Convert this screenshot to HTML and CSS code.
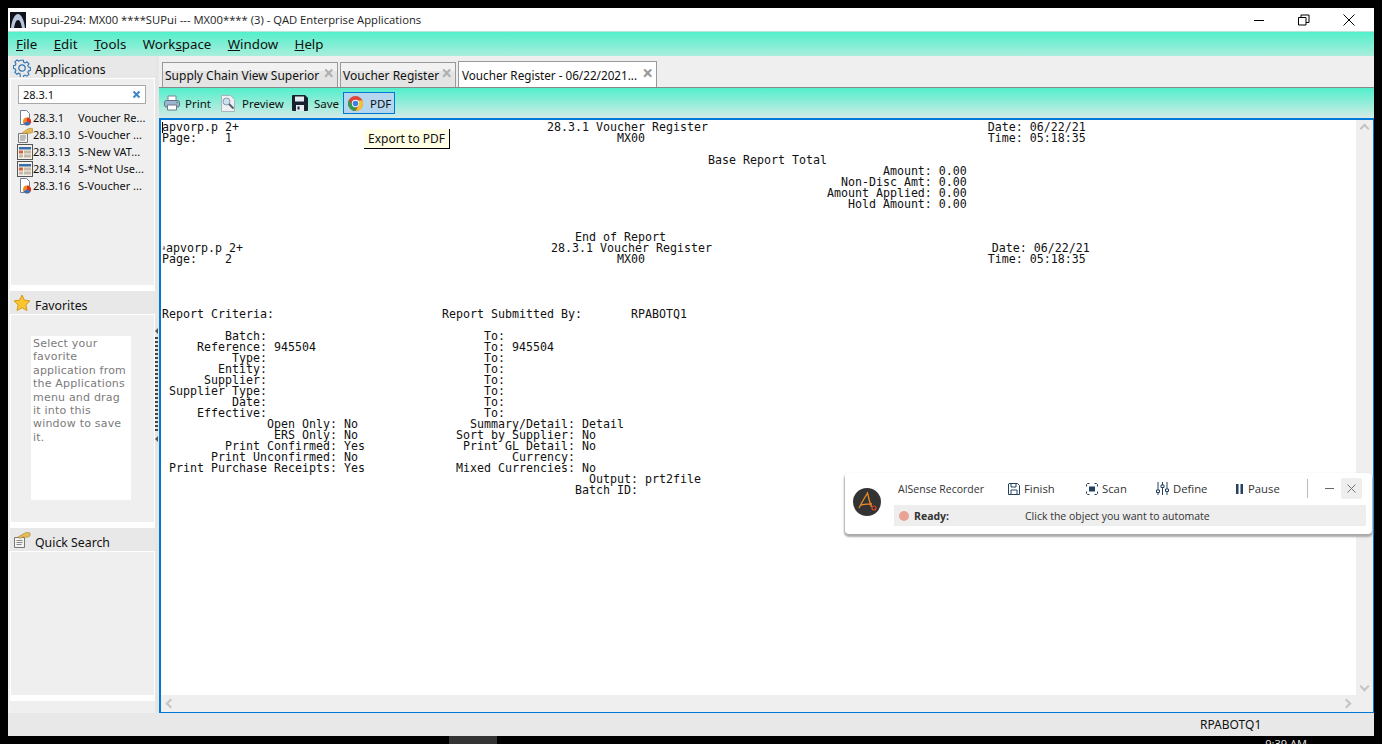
FILE: index.html
```html
<!DOCTYPE html>
<html lang="en">
<head>
<meta charset="utf-8">
<title>QAD Enterprise Applications</title>
<link rel="stylesheet" href="styles.css">
</head>
<body>
<div class="window">
  <header class="titlebar">
    <svg class="app-logo" width="16" height="16" viewBox="0 0 16 16"><rect width="16" height="16" fill="#10131c"/><path d="M1 16C2 7 5 2 8 2s6 5 7 14h-3C11 11 10 8 8 8s-3 3-4 8z" fill="#b9c6dc"/></svg>
    <span class="title-text">supui-294: MX00 ****SUPui --- MX00**** (3) - QAD Enterprise Applications</span>
    <div class="win-controls">
      <svg width="12" height="12" viewBox="0 0 12 12"><path d="M1 6.5h10" stroke="#000" fill="none"/></svg>
      <svg width="12" height="12" viewBox="0 0 12 12"><path d="M.5 3.5h7.5v7.5H.5zM3 3.5V1h8v7.5H8" stroke="#000" fill="none"/></svg>
      <svg width="12" height="12" viewBox="0 0 12 12"><path d="M.5.5l11 11M11.500.5l-11 11" stroke="#000" fill="none"/></svg>
    </div>
  </header>
  <nav class="menubar">
    <span><u>F</u>ile</span><span><u>E</u>dit</span><span><u>T</u>ools</span><span>Work<u>s</u>pace</span><span><u>W</u>indow</span><span><u>H</u>elp</span>
  </nav>
  <div class="workarea">
    <aside class="sidebar">
      <section class="panel panel-apps">
        <h2 class="panel-head">
          <svg width="18" height="18" viewBox="0 0 18 18"><path d="M7.400 1h3.200l.4 2.200 1.500.7 1.900-1.200 2.200 2.200-1.200 1.900.7 1.600 2 .4v3.200l-2 .4-.7 1.600 1.200 1.900-2.200 2.200-1.900-1.200-1.500.7-.4 1.900H7.400L7 15.600l-1.500-.7-1.900 1.200-2.200-2.200 1.200-1.900-.7-1.600-1.900-.4V6.800l1.900-.4.7-1.600-1.200-1.900 2.200-2.200 1.900 1.200L7 1.200z" transform="translate(.5 .3) scale(.93)" fill="none" stroke="#2f74b5" stroke-width="1.200"/><circle cx="9" cy="9" r="3.200" fill="none" stroke="#2f74b5" stroke-width="1.200"/></svg>
          Applications
        </h2>
        <div class="panel-body">
          <div class="search"><span>28.3.1</span><svg width="9" height="9" viewBox="0 0 9 9"><path d="M1.500 1.500l6 6M7.500 1.500l-6 6" stroke="#3f86c8" stroke-width="2"/></svg></div>
          <ul class="app-list">
            <li><svg class="ico" viewBox="0 0 16 16"><path d="M3.500.5h6l3 3v11h-9z" fill="#fff" stroke="#6f7f95"/><circle cx="10" cy="11.500" r="4" fill="#ef8a1d"/><path d="M10 11.500V7.500a4 4 0 0 1 3.500 6z" fill="#d9302a"/><path d="M10 11.500l3.500 2a4 4 0 0 1-6.900 0z" fill="#2f6fc4"/></svg><span>28.3.1</span><span>Voucher Re...</span></li>
            <li><svg class="ico" viewBox="0 0 16 16"><path d="M1.500 6.500h9v9h-9z" fill="#f2f2f2" stroke="#777"/><path d="M3 9h6M3 11h6M3 13h5" stroke="#888"/><path d="M5 6l5-3.500c2-1.500 4-1.500 6-.5v3c-2 1.500-5 1.500-7 1l-2 1z" fill="#e6bb57" stroke="#a57f26" stroke-width=".6"/></svg><span>28.3.10</span><span>S-Voucher ...</span></li>
            <li><svg class="ico" viewBox="0 0 16 16"><rect x=".5" y=".5" width="15" height="15" fill="#f4f1ea" stroke="#555"/><path d="M2 3h12v2.500H2z" fill="#3b6ea8"/><path d="M2 6.500h4v3H2z" fill="#d9623a"/><path d="M7 6.500h7v3H7zM2 10.500h4v3H2zM7 10.500h7v3H7z" fill="#c4b9a6"/></svg><span>28.3.13</span><span>S-New VAT...</span></li>
            <li><svg class="ico" viewBox="0 0 16 16"><rect x=".5" y=".5" width="15" height="15" fill="#f4f1ea" stroke="#555"/><path d="M2 3h12v2.500H2z" fill="#3b6ea8"/><path d="M2 6.500h4v3H2z" fill="#d9623a"/><path d="M7 6.500h7v3H7zM2 10.500h4v3H2zM7 10.500h7v3H7z" fill="#c4b9a6"/></svg><span>28.3.14</span><span>S-*Not Use...</span></li>
            <li><svg class="ico" viewBox="0 0 16 16"><path d="M3.500.5h6l3 3v11h-9z" fill="#fff" stroke="#6f7f95"/><circle cx="10" cy="11.500" r="4" fill="#ef8a1d"/><path d="M10 11.500V7.500a4 4 0 0 1 3.500 6z" fill="#d9302a"/><path d="M10 11.500l3.500 2a4 4 0 0 1-6.900 0z" fill="#2f6fc4"/></svg><span>28.3.16</span><span>S-Voucher ...</span></li>
          </ul>
        </div>
      </section>
      <section class="panel panel-favs">
        <h2 class="panel-head">
          <svg width="18" height="18" viewBox="0 0 18 18"><path d="M9 1l2.400 5.200 5.600.7-4.100 3.900 1.100 5.700L9 13.700l-5 2.800 1.100-5.700L1 6.900l5.600-.7z" fill="#fbc52d" stroke="#d49b1b"/></svg>
          Favorites
        </h2>
        <div class="panel-body fav-body">
          <p class="fav-note">Select your favorite application from the Applications menu and drag it into this window to save it.</p>
        </div>
      </section>
      <section class="panel panel-quick">
        <h2 class="panel-head">
          <svg width="18" height="18" viewBox="0 0 18 18"><path d="M1.500 6.500h10v10h-10z" fill="#f2f2f2" stroke="#777"/><path d="M3.500 9.500h6M3.500 11.500h6M3.500 13.500h5" stroke="#888"/><path d="M5 6l6-3.500c2-1 4-1.500 6-.5v3c-2 1.500-5 1.500-7 1l-3 1.500z" fill="#e6bb57" stroke="#a57f26" stroke-width=".6"/></svg>
          Quick Search
        </h2>
        <div class="panel-body quick-body"></div>
      </section>
      <div class="sidebar-foot"></div>
    </aside>
    <div class="splitter">
      <span class="grip-arrow"></span>
      <span class="grip-dots"></span>
      <span class="grip-arrow"></span>
    </div>
    <main class="content">
      <div class="tabs">
        <div class="tab tab-one"><span>Supply Chain View Superior</span><b>×</b></div>
        <div class="tab tab-two"><span>Voucher Register</span><b>×</b></div>
        <div class="tab tab-active"><span>Voucher Register - 06/22/2021...</span><b>×</b></div>
      </div>
      <div class="toolbar">
        <div class="tool tool-print">
          <svg width="16" height="16" viewBox="0 0 16 16"><path d="M4 1h8v5H4z" fill="#fff" stroke="#7a8794"/><rect x=".5" y="5.500" width="15" height="6.500" rx="2" fill="#9db6cf" stroke="#5f7488"/><path d="M3.500 10h9v5h-9z" fill="#fff" stroke="#6d7a88"/><circle cx="13" cy="7.500" r=".8" fill="#3b9b48"/></svg>
          <span>Print</span>
        </div>
        <div class="tool tool-preview">
          <svg width="16" height="17" viewBox="0 0 16 17"><path d="M1.500.5h9l4 4v12h-13z" fill="#eef0f2" stroke="#aab4bd"/><circle cx="6.500" cy="6.500" r="3.500" fill="#cfe0ef" stroke="#8499ae"/><path d="M9 9l4.500 4.500" stroke="#56616c" stroke-width="2"/></svg>
          <span>Preview</span>
        </div>
        <div class="tool tool-save">
          <svg width="16" height="16" viewBox="0 0 16 16"><path d="M1 0h12l3 3v12a1 1 0 0 1-1 1H1a1 1 0 0 1-1-1V1a1 1 0 0 1 1-1z" fill="#16222e"/><path d="M3 1.500h9v5H3z" fill="#e5ebf0"/><path d="M4 10h8v6H4z" fill="#e5ebf0"/><path d="M5.500 11.500h2v3h-2z" fill="#16222e"/></svg>
          <span>Save</span>
        </div>
        <div class="tool tool-pdf">
          <svg width="15" height="15" viewBox="0 0 16 16"><circle cx="8" cy="8" r="8" fill="#db4437"/><path d="M8 16a8 8 0 0 1-6.900-12L5 10.500 8.500 12z" fill="#2f9e4f"/><path d="M16 8a8 8 0 0 1-8 8l3.500-6L10 4.800h5.400c.4 1 .6 2.100.6 3.200z" fill="#f7c32e"/><circle cx="8" cy="8" r="3.900" fill="#fff"/><circle cx="8" cy="8" r="3" fill="#3f7fe0"/></svg>
          <span>PDF</span>
        </div>
      </div>
      <div class="report">
        <pre class="report-text"><span class="caret"></span>apvorp.p 2+                                            28.3.1 Voucher Register                                        Date: 06/22/21
Page:    1                                                       MX00                                                 Time: 05:18:35

                                                                              Base Report Total
                                                                                                       Amount: 0.00
                                                                                                 Non-Disc Amt: 0.00
                                                                                               Amount Applied: 0.00
                                                                                                  Hold Amount: 0.00


                                                           End of Report
<span class="ff-mark">ª</span>apvorp.p 2+                                            28.3.1 Voucher Register                                        Date: 06/22/21
Page:    2                                                       MX00                                                 Time: 05:18:35




Report Criteria:                        Report Submitted By:       RPABOTQ1

         Batch:                               To:
     Reference: 945504                        To: 945504
          Type:                               To:
        Entity:                               To:
      Supplier:                               To:
 Supplier Type:                               To:
          Date:                               To:
     Effective:                               To:
               Open Only: No                Summary/Detail: Detail
                ERS Only: No              Sort by Supplier: No
         Print Confirmed: Yes              Print GL Detail: No
       Print Unconfirmed: No                      Currency:
 Print Purchase Receipts: Yes             Mixed Currencies: No
                                                             Output: prt2file
                                                           Batch ID:</pre>
        <div class="scroll-v"><i class="chev chev-up"></i><i class="chev chev-down"></i></div>
        <div class="scroll-h"><i class="chev chev-left"></i><i class="chev chev-right"></i></div>
        <div class="scroll-corner"></div>
      </div>
    </main>
  </div>
  <footer class="statusbar"><span>RPABOTQ1</span></footer>
  <div class="tooltip">Export to PDF</div>
  <div class="recorder">
    <svg class="rec-logo" width="28" height="28" viewBox="0 0 28 28"><circle cx="14" cy="14" r="14" fill="#333"/><path d="M6 20C9 14 12 9 14.500 5c1 5 2.500 10 4 14M8 17c3-.5 7-1.500 11-1" fill="none" stroke="#ef8b24" stroke-width="1.300"/><circle cx="21" cy="20" r="2" fill="none" stroke="#d8442c" stroke-width="1.200"/></svg>
    <div class="rec-main">
      <div class="rec-actions">
        <span class="rec-name">AISense Recorder</span>
        <span class="rec-btn rec-finish"><svg width="12" height="12" viewBox="0 0 12 12"><path d="M1 .5h8.500l2 2V11.500H.5V1z" fill="none" stroke="#24415f"/><path d="M3 1v3h5V1M3 11V7h6v4" fill="none" stroke="#24415f"/></svg>Finish</span>
        <span class="rec-btn rec-scan"><svg width="12" height="12" viewBox="0 0 12 12"><path d="M.5 3.500V1.500l1-1h2M8.500.5h2l1 1v2M11.500 8.500v2l-1 1h-2M3.500 11.500h-2l-1-1v-2" fill="none" stroke="#24415f"/><rect x="3" y="3.500" width="6" height="5" fill="#24415f"/></svg>Scan</span>
        <span class="rec-btn rec-define"><svg width="13" height="13" viewBox="0 0 13 13"><path d="M2 0v13M6.500 0v13M11 0v13" stroke="#24415f"/><path d="M.5 8h3v2.500h-3zM5 3h3v2.500H5zM9.500 7h3v2.500h-3z" fill="#fff" stroke="#24415f"/></svg>Define</span>
        <span class="rec-btn rec-pause"><svg width="9" height="10" viewBox="0 0 9 10"><path d="M1 0h2.500v10H1zM5.500 0H8v10H5.500z" fill="#24415f"/></svg>Pause</span>
        <span class="rec-divider"></span>
        <span class="rec-min"></span>
        <span class="rec-close"><svg width="9" height="9" viewBox="0 0 9 9"><path d="M.5.500l8 8M8.500.500l-8 8" stroke="#777" fill="none"/></svg></span>
      </div>
      <div class="rec-status"><i class="rec-dot"></i><b>Ready:</b><span>Click the object you want to automate</span></div>
    </div>
  </div>
</div>
<div class="taskbar"><span class="task-item"></span><span class="clock">9:39 AM</span></div>
</body>
</html>
```

FILE: styles.css
```css
* { box-sizing: border-box; }
html, body { margin: 0; height: 100%; }
body {
  background: #000;
  overflow: hidden;
  font-family: "Noto Sans", "Open Sans", sans-serif;
  color: #111;
}
.window {
  position: relative;
  margin: 8px 8px 0;
  height: 728px;
  background: #f0f0f0;
  display: flex;
  flex-direction: column;
}
.titlebar {
  height: 23px;
  background: #fff;
  display: flex;
  align-items: center;
  padding-left: 2px;
}
.app-logo { margin-right: 5px; }
.title-text { color: #222; font-family: "Open Sans", sans-serif; font-size: 11.250px; }
.win-controls {
  margin-left: auto;
  display: flex;
  gap: 33px;
  padding-right: 19px;
}
.win-controls svg { display: block; }
.menubar {
  height: 25px;
  border-top: 1px solid #b9e7dc;
  background: linear-gradient(#52efcb, #a9eedc);
  display: flex;
  align-items: center;
  padding-left: 8px;
  gap: 16.400px;
  font-size: 13.300px;
}
.workarea { flex: 1; display: flex; min-height: 0; }
.sidebar {
  width: 145px;
  margin-left: 2px;
  display: flex;
  flex-direction: column;
  background: #fff;
}
.panel-head {
  margin: 0;
  height: 24px;
  background: #e8e8e8;
  display: flex;
  align-items: center;
  gap: 4px;
  padding: 5px 0 0 3px;
  font-size: 12.300px;
  font-weight: 400;
  border-bottom: 1px solid #fff;
}
.panel-head svg { margin-top: -4px; }
.panel-apps .panel-head { height: 23px; padding-top: 4px; }
.panel-apps .panel-head svg { margin-top: -3px; }
.panel-body {
  background: #efefef;
  margin: 0 1px;
}
.panel-apps .panel-body { height: 206px; padding: 6px 7px 0 7px; }
.panel-apps, .panel-favs { margin-bottom: 6px; }
.search {
  height: 19px;
  width: 128px;
  margin-bottom: 5px;
  background: #fff;
  border: 1px solid #a9a9a9;
  display: flex;
  align-items: center;
  justify-content: space-between;
  padding: 0 4px;
  font-size: 11px;
}
.app-list {
  list-style: none;
  margin: 0 0 0 -1px;
  padding: 0;
  font-size: 11px;
}
.app-list li {
  height: 17px;
  display: grid;
  grid-template-columns: 16px 45px 1fr;
  align-items: center;
  white-space: nowrap;
}
.ico { width: 16px; height: 16px; display: block; }
.fav-body { height: 207px; padding: 21px 20px 0 20px; }
.fav-note {
  margin: 0;
  width: 100px;
  height: 164px;
  background: #fff;
  padding: 1px 2px 0;
  font-family: "DejaVu Sans", sans-serif;
  font-size: 11px;
  line-height: 13.400px;
  letter-spacing: .2px;
  color: #7b7b7b;
}
.quick-body { height: 143px; }
.sidebar-foot { flex: 1; margin-top: 6px; background: #efefef; }
.splitter {
  width: 4px;
  background: #e6e6e6;
  display: flex;
  flex-direction: column;
  justify-content: center;
  align-items: flex-start;
  gap: 3px;
}
.grip-arrow {
  width: 0;
  height: 0;
  border: 3px solid transparent;
  border-left-width: 0;
  border-right: 3px solid #555;
}
.grip-dots {
  width: 3px;
  height: 96px;
  background: repeating-linear-gradient(#444 0 2px, transparent 2px 4px);
}
.content { flex: 1; min-width: 0; display: flex; flex-direction: column; }
.tabs {
  height: 32px;
  padding: 6px 0 0 3px;
  display: flex;
  gap: 2px;
  align-items: flex-end;
  background: #efefef;
  border-bottom: 1px solid #888;
}
.tab {
  height: 25px;
  display: flex;
  align-items: center;
  justify-content: space-between;
  padding: 0 3px 0 2px;
  font-size: 12px;
  background: linear-gradient(#f2f2f2 0 8px, #e4e4e4 8px);
  border: 1px solid #999;
  border-bottom: 0;
  white-space: nowrap;
}
.tab b { font-size: 19px; line-height: 1; font-weight: 700; color: #b0b0b0; margin-top: -3px; }
.tab-one { width: 176px; }
.tab-two { width: 116px; }
.tab-active { width: 199px; height: 26px; background: #fff; padding: 0 3px 0 3px; font-size: 11.700px; }
.tab-active b { color: #999; }
.toolbar {
  height: 30px;
  background: linear-gradient(#52efcb, #d4ebe6);
  display: flex;
  align-items: center;
  padding-left: 5px;
  font-size: 11.500px;
}
.tool { display: flex; align-items: center; gap: 5px; }
.tool-print { width: 56px; }
.tool-preview { width: 72px; gap: 6px; }
.tool-save { width: 51px; gap: 6px; }
.tool-pdf {
  width: 52px;
  height: 22px;
  gap: 7px;
  padding-left: 4px;
  background: #b4d6ee;
  border: 1px solid #0078d7;
}
.report {
  flex: 1;
  min-height: 0;
  display: grid;
  grid-template-columns: 1fr 17px;
  grid-template-rows: 1fr 17px;
  background: #fff;
  border: 1px solid #0078d7;
  border-top-width: 2px;
  border-left-width: 2px;
}
.report-text {
  margin: 0;
  padding: 2px 0 0 1px;
  overflow: hidden;
  font-family: "DejaVu Sans Mono", monospace;
  font-size: 11.630px;
  line-height: 11px;
  color: #111;
}
.caret {
  display: inline-block;
  width: 1px;
  height: 11px;
  margin-right: -1px;
  vertical-align: top;
  background: #000;
}
.ff-mark {
  display: inline-block;
  width: 4px;
  height: 11px;
  font-size: 6px;
  line-height: 11px;
  vertical-align: top;
  overflow: hidden;
}
.scroll-v, .scroll-h, .scroll-corner { background: #efefef; position: relative; }
.scroll-corner { grid-column: 2; grid-row: 2; }
.chev {
  position: absolute;
  width: 7px;
  height: 7px;
  border: solid #c4c4c4;
  border-width: 2px 0 0 2px;
}
.chev-up { top: 5px; left: 5px; transform: rotate(45deg); }
.chev-down { bottom: 5px; left: 5px; transform: rotate(225deg); }
.chev-left { left: 6px; top: 5px; transform: rotate(-45deg); }
.chev-right { right: 6px; top: 5px; transform: rotate(135deg); }
.statusbar {
  height: 23px;
  background: #e8e8e8;
  display: flex;
  align-items: center;
  padding-left: 1192px;
  font-size: 12px;
}
.tooltip {
  position: absolute;
  left: 356px;
  top: 121px;
  width: 86px;
  height: 20px;
  background: #ffffe6;
  border: solid #000;
  border-width: 0 1px 1px 0;
  box-shadow: -1px -1px 0 #fff;
  padding-left: 4px;
  font-size: 12px;
  line-height: 19px;
}
.recorder {
  position: absolute;
  left: 837px;
  top: 465px;
  width: 527px;
  height: 61px;
  background: #fff;
  border-radius: 4px;
  box-shadow: 0 2px 2px 1px #aaa;
  display: flex;
  align-items: center;
  padding: 4px 6px 8px 8px;
  font-family: "Open Sans", sans-serif;
  font-size: 11.300px;
  color: #333;
}
.rec-logo { flex: none; margin-right: 13px; }
.rec-main { flex: 1; min-width: 0; display: flex; flex-direction: column; gap: 5px; }
.rec-actions { height: 23px; display: flex; align-items: center; }
.rec-name { width: 114px; padding-left: 4px; font-size: 10.500px; }
.rec-btn { display: flex; align-items: center; gap: 4px; color: #333; }
.rec-btn svg { flex: none; }
.rec-finish { width: 78px; }
.rec-scan { width: 70px; }
.rec-define { width: 79px; }
.rec-pause { width: 72px; }
.rec-divider { width: 1px; height: 19px; background: #bbb; }
.rec-min { width: 9px; height: 1px; background: #666; margin-left: 17px; }
.rec-close {
  width: 21px;
  height: 21px;
  margin-left: 7px;
  background: #eee;
  border-radius: 2px;
  display: flex;
  align-items: center;
  justify-content: center;
}
.rec-status {
  height: 21px;
  background: #eee;
  display: flex;
  align-items: center;
  padding-left: 5px;
  font-size: 10.500px;
}
.rec-dot { width: 10px; height: 10px; border-radius: 50%; background: #e9a294; margin-right: 5px; }
.rec-status b { width: 111px; font-weight: 700; }
.taskbar {
  height: 8px;
  position: relative;
  overflow: hidden;
  display: flex;
  padding-left: 449px;
}
.task-item { width: 48px; height: 8px; background: #333; }
.clock {
  margin-left: auto;
  margin-right: 75px;
  margin-top: 1px;
  color: #ddd;
  font-size: 11px;
  line-height: 14px;
}
```
